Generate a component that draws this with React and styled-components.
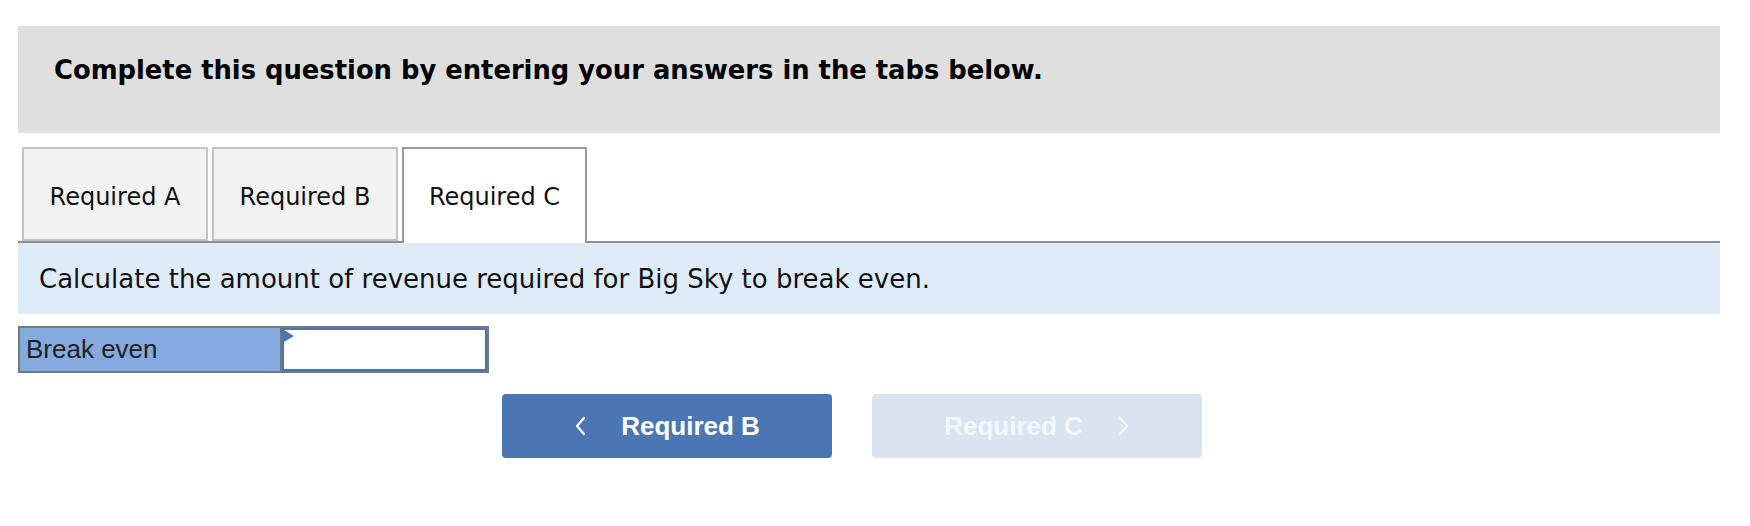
import React from "react";
import styled, { createGlobalStyle } from "styled-components";

const Global = createGlobalStyle`
  html, body { margin: 0; padding: 0; background: #ffffff; }
  body { font-family: "DejaVu Sans", Verdana, sans-serif; color: #000; }
`;

const Page = styled.div`
  padding: 26px 30px 0 18px;
  width: 1702px;
`;

const Banner = styled.div`
  height: 107px;
  background: #dfdfdf;
  padding: 29px 0 0 36px;
  box-sizing: border-box;
`;

const BannerText = styled.h2`
  margin: 0;
  font-family: "DejaVu Sans", Verdana, sans-serif;
  font-weight: bold;
  font-size: 25.8px;
  line-height: 30px;
  color: #000;
`;

const TabList = styled.div`
  margin-top: 14px;
  display: flex;
  gap: 4px;
  padding-left: 4px;
  border-bottom: 2px solid #8e8e8e;
  height: 94px;
`;

const Tab = styled.div`
  box-sizing: border-box;
  width: ${(p) => p.$w}px;
  height: ${(p) => (p.$active ? 96 : 94)}px;
  border: 2px solid ${(p) => (p.$active ? "#9a9a9a" : "#c4c4c4")};
  border-bottom: ${(p) => (p.$active ? "none" : "2px solid #c4c4c4")};
  background: ${(p) => (p.$active ? "#ffffff" : "#f2f2f2")};
  padding-top: 34px;
  text-align: center;
  font-size: 24px;
  line-height: 28px;
  color: #111;
`;

const Prompt = styled.div`
  height: 71px;
  background: #deebf8;
  display: flex;
  align-items: center;
  padding-left: 21px;
  font-size: 26px;
  color: #111;
`;

const AnswerRow = styled.div`
  margin-top: 12px;
  display: flex;
  width: 471px;
  height: 47px;
  box-sizing: border-box;
  border: 2px solid #777777;
  background: #777777;
  gap: 2px;
`;

const Label = styled.div`
  width: 260px;
  background: #84aadf;
  display: flex;
  align-items: center;
  padding-left: 6px;
  box-sizing: border-box;
  font-family: "Liberation Sans", Arial, sans-serif;
  font-size: 26px;
  color: #222;
`;

const InputCell = styled.div`
  position: relative;
  flex: 1;
  background: #ffffff;
  border: 2px solid #4a76b5;
  box-sizing: border-box;
`;

const Flag = styled.span`
  position: absolute;
  left: 0;
  top: 0;
  width: 0;
  height: 0;
  border-top: 6px solid transparent;
  border-bottom: 6px solid transparent;
  border-left: 10px solid #4a76b5;
`;

const NavRow = styled.div`
  margin-top: 21px;
  display: flex;
  gap: 40px;
  padding-left: 484px;
`;

const NavButton = styled.button`
  width: 330px;
  height: 64px;
  border: none;
  border-radius: 4px;
  background: ${(p) => (p.$disabled ? "#dae3ef" : "#4a76b4")};
  color: ${(p) => (p.$disabled ? "#f4f7fb" : "#ffffff")};
  font-family: "Liberation Sans", Arial, sans-serif;
  font-weight: bold;
  font-size: 26px;
  display: flex;
  align-items: center;
  justify-content: center;
  gap: 35px;
  padding: 0;
  cursor: ${(p) => (p.$disabled ? "default" : "pointer")};
`;

const Chevron = ({ dir }) => (
  <svg width="12" height="20" viewBox="0 0 12 20" fill="none">
    <path
      d={dir === "left" ? "M10 2 L3 10 L10 18" : "M2 2 L9 10 L2 18"}
      stroke="currentColor"
      strokeWidth="2.2"
      strokeLinecap="round"
      strokeLinejoin="round"
    />
  </svg>
);

export default function App() {
  return (
    <>
      <Global />
      <Page>
        <Banner>
          <BannerText>Complete this question by entering your answers in the tabs below.</BannerText>
        </Banner>
        <TabList>
          <Tab $w={186}>Required A</Tab>
          <Tab $w={186}>Required B</Tab>
          <Tab $w={185} $active>Required C</Tab>
        </TabList>
        <Prompt>Calculate the amount of revenue required for Big Sky to break even.</Prompt>
        <AnswerRow>
          <Label>Break even</Label>
          <InputCell>
            <Flag />
          </InputCell>
        </AnswerRow>
        <NavRow>
          <NavButton>
            <Chevron dir="left" />
            <span>Required B</span>
          </NavButton>
          <NavButton $disabled>
            <span>Required C</span>
            <Chevron dir="right" />
          </NavButton>
        </NavRow>
      </Page>
    </>
  );
}
